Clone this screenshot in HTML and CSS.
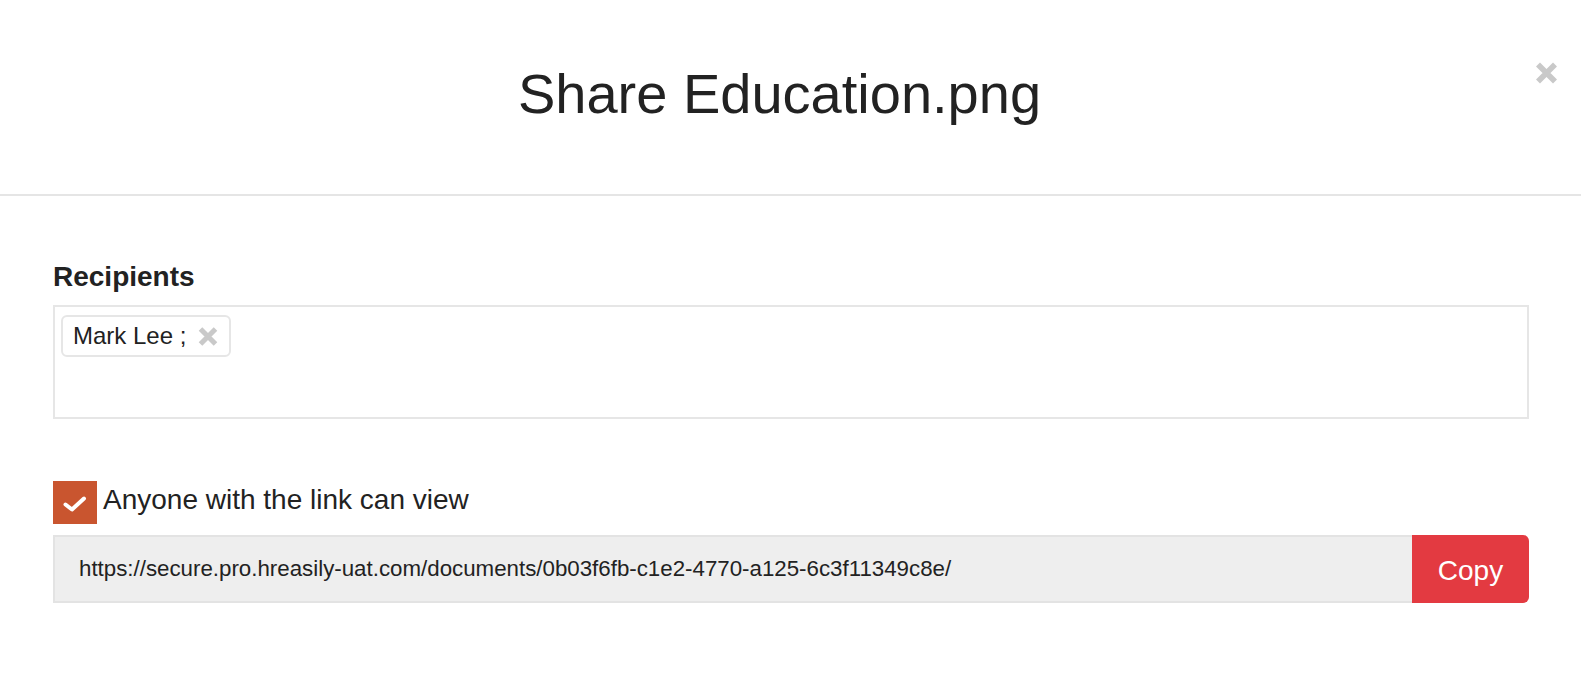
FILE: index.html
```html
<!DOCTYPE html>
<html lang="en">
<head>
<meta charset="utf-8">
<title>Share Education.png</title>
<link rel="stylesheet" href="styles.css">
</head>
<body>
<div class="modal">
  <header class="modal-header">
    <h1 class="modal-title">Share Education.png</h1>
    <button class="close" type="button" aria-label="Close">
      <svg width="23" height="22" viewBox="0 0 23 22"><path d="M3 2.5 L20 19.5 M20 2.5 L3 19.5" stroke="#c9c9c9" stroke-width="5.6" fill="none"/></svg>
    </button>
  </header>
  <section class="modal-body">
    <label class="field-label">Recipients</label>
    <div class="recipients">
      <span class="tag">Mark Lee ;
        <svg class="tag-x" width="20" height="19" viewBox="0 0 20 19"><path d="M2.5 2 L17.5 17 M17.5 2 L2.5 17" stroke="#c9c9c9" stroke-width="5" fill="none"/></svg>
      </span>
    </div>
    <div class="check-row">
      <span class="checkbox">
        <svg width="26" height="18" viewBox="0 0 26 18"><path d="M3.5 9.5 L10 14.5 L22 3.5" stroke="#fff" stroke-width="4" stroke-linecap="round" stroke-linejoin="round" fill="none"/></svg>
      </span>
      <span class="check-label">Anyone with the link can view</span>
    </div>
    <div class="link-row">
      <div class="link-field">https://secure.pro.hreasily-uat.com/documents/0b03f6fb-c1e2-4770-a125-6c3f11349c8e/</div>
      <button class="copy-btn" type="button">Copy</button>
    </div>
  </section>
</div>
</body>
</html>
```

FILE: styles.css
```css
html, body {
  margin: 0;
  padding: 0;
  background: #fff;
}
body {
  font-family: "Liberation Sans", Arial, Helvetica, sans-serif;
  color: #222;
}
.modal {
  width: 1581px;
}
.modal-header {
  box-sizing: border-box;
  height: 196px;
  padding: 62px 23px 0 24px;
  border-bottom: 2px solid #e5e5e5;
  display: flex;
  align-items: flex-start;
}
.modal-title {
  flex: 1;
  margin: 0;
  text-align: center;
  font-size: 56px;
  line-height: 64px;
  font-weight: normal;
  color: #222;
}
.close {
  width: 23px;
  height: 22px;
  padding: 0;
  margin: 0;
  border: 0;
  background: none;
  display: block;
}
.close svg {
  display: block;
}
.modal-body {
  padding: 65px 52px 0 53px;
}
.field-label {
  display: block;
  font-size: 28px;
  line-height: 32px;
  font-weight: bold;
  color: #222;
  margin-bottom: 12px;
}
.recipients {
  box-sizing: border-box;
  height: 114px;
  border: 2px solid #e6e6e6;
  padding: 8px 6px;
  display: flex;
  align-items: flex-start;
}
.tag {
  box-sizing: border-box;
  height: 42px;
  border: 2px solid #e6e6e6;
  border-radius: 6px;
  padding: 0 11px 0 10px;
  display: inline-flex;
  align-items: center;
  font-size: 24px;
  line-height: 38px;
  color: #222;
}
.tag-x {
  display: block;
  margin-left: 12px;
}
.check-row {
  display: flex;
  align-items: flex-start;
  margin-top: 62px;
}
.checkbox {
  width: 44px;
  height: 43px;
  background: #c9552f;
  display: flex;
  align-items: center;
  justify-content: center;
}
.checkbox svg {
  display: block;
  margin-top: 2px;
}
.check-label {
  margin-left: 6px;
  margin-top: 3px;
  font-size: 28px;
  line-height: 32px;
  color: #222;
}
.link-row {
  display: flex;
  margin-top: 11px;
  height: 68px;
}
.link-field {
  flex: 1;
  box-sizing: border-box;
  height: 68px;
  background: #eeeeee;
  border: 2px solid #e3e3e3;
  border-right: 0;
  padding: 0 24px;
  font-size: 22.3px;
  line-height: 64px;
  color: #222;
  white-space: nowrap;
  overflow: hidden;
}
.copy-btn {
  box-sizing: border-box;
  width: 117px;
  height: 68px;
  border: 0;
  margin: 0;
  padding: 3px 0 0;
  background: #e33a41;
  color: #fff;
  font-family: "Liberation Sans", Arial, Helvetica, sans-serif;
  font-size: 28px;
  border-radius: 0 6px 6px 0;
}
```
